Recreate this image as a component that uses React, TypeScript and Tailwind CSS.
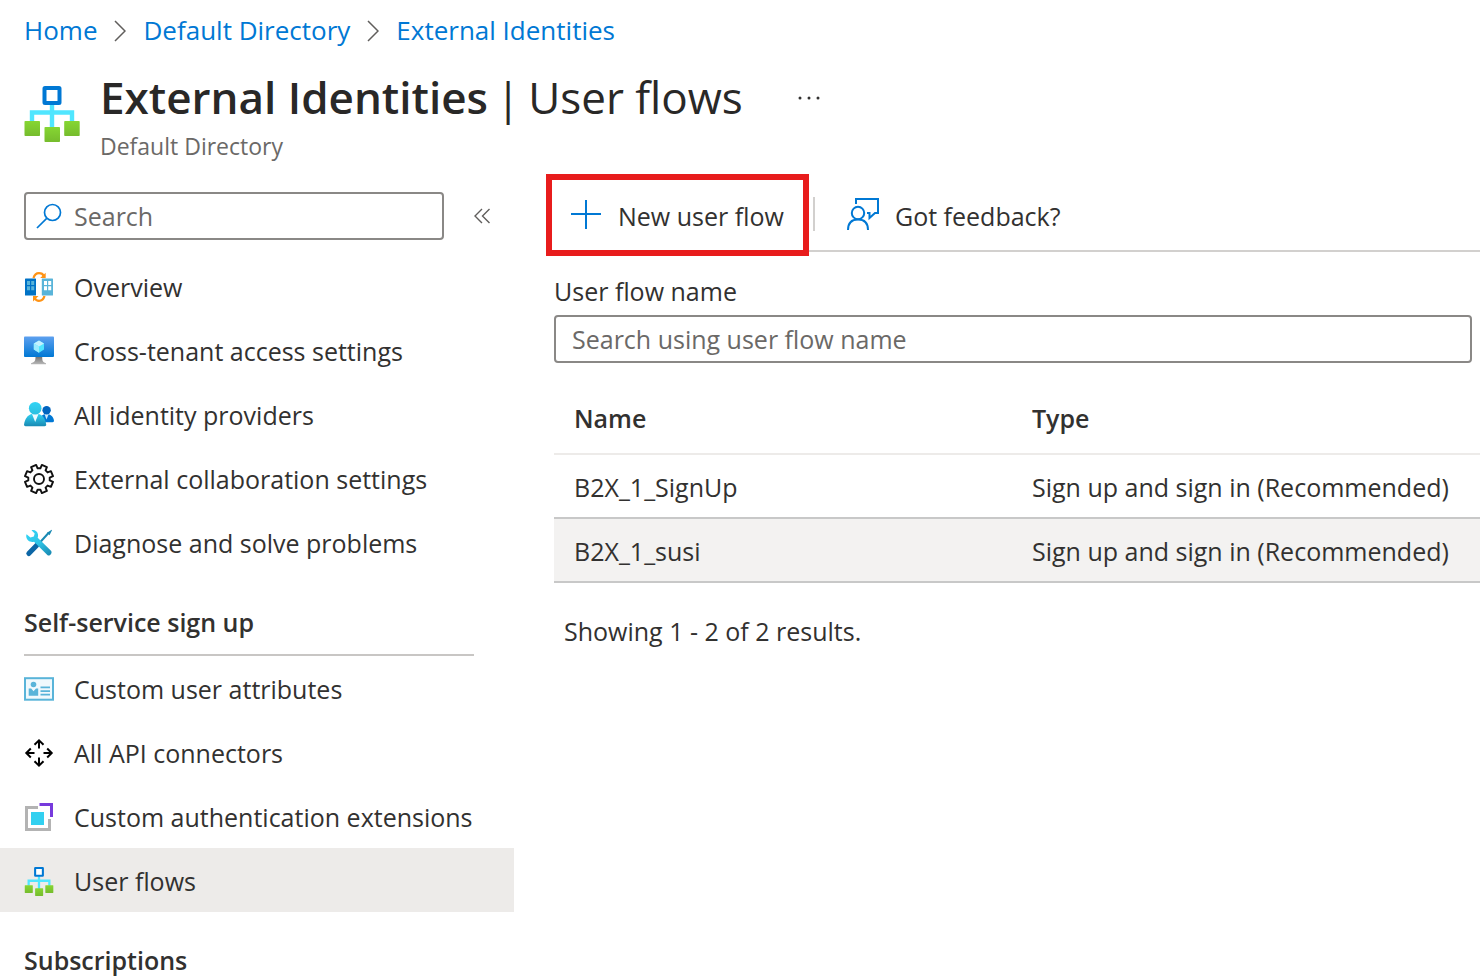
import type { ReactNode } from "react";

function FlowIcon({ className }: { className: string }) {
  return (
    <svg className={className} viewBox="0 0 56 58" fill="none" aria-hidden="true">
      <defs>
        <linearGradient id="leaf" x1="0" y1="0" x2="0" y2="1">
          <stop offset="0" stopColor="#86d633" />
          <stop offset="1" stopColor="#76bc2d" />
        </linearGradient>
      </defs>
      <path d="M28 20V44M8 38V28.500H48V38" stroke="#50e6ff" strokeWidth="4.400" />
      <rect x="20.500" y="4" width="15" height="15" rx="0.500" fill="#fff" stroke="#0078d4" strokeWidth="4" />
      <rect x="0.500" y="37" width="15.500" height="15" rx="0.800" fill="url(#leaf)" />
      <rect x="20.500" y="43" width="15.500" height="15" rx="0.800" fill="url(#leaf)" />
      <rect x="40.200" y="37" width="15.500" height="15" rx="0.800" fill="url(#leaf)" />
    </svg>
  );
}

const iconClass = "size-[30px] shrink-0";

function OverviewIcon() {
  return (
    <svg className={iconClass} viewBox="0 0 30 30" fill="none" aria-hidden="true">
      <path d="M9.500 6C10.500 2.500 12.500 1.200 15 1.200C17.500 1.200 19 2.200 19.800 4" stroke="#ff9315" strokeWidth="2.300" />
      <path d="M21.700 0.800V6H16.200Z" fill="#ff9315" />
      <path d="M20.500 24C19.500 27.500 17.500 28.800 15 28.800C12.500 28.800 11.500 27.800 10.500 26" stroke="#ff9315" strokeWidth="2.300" />
      <path d="M9 29.500V24H14.500Z" fill="#ff9315" />
      <rect x="1" y="6.500" width="11" height="17" rx="0.600" fill="#0072c6" />
      <path d="M3 9h3v4H3zM7.200 9h3v4h-3zM3 14.200h3v4H3zM7.200 14.200h3v4h-3z" fill="#59b4d9" />
      <rect x="17.800" y="6.500" width="11.200" height="17" rx="0.600" fill="#59b4d9" />
      <path d="M20 9h3v4h-3zM24.200 9h3v4h-3zM20 14.200h3v4h-3zM24.200 14.200h3v4h-3z" fill="#fff" />
    </svg>
  );
}

function MonitorIcon() {
  return (
    <svg className={iconClass} viewBox="0 0 30 30" aria-hidden="true">
      <defs>
        <linearGradient id="screen" x1="0" y1="0" x2="0" y2="1">
          <stop offset="0" stopColor="#5ea0ef" />
          <stop offset="1" stopColor="#0078d4" />
        </linearGradient>
        <linearGradient id="stand" x1="0" y1="0" x2="0" y2="1">
          <stop offset="0" stopColor="#707070" />
          <stop offset="1" stopColor="#b8b8b8" />
        </linearGradient>
      </defs>
      <path d="M11.500 20.500H18.200C18.200 24.500 18.500 26.300 22 27.200V28.200H7V27.200C11 26.300 11.500 24.500 11.500 20.500Z" fill="url(#stand)" />
      <rect y="0.500" width="30" height="20.500" rx="0.900" fill="url(#screen)" />
      <path d="M15 4.500L20 7.500V13.500L15 16.700L9.800 13.500V7.500Z" fill="#50e6ff" />
      <path d="M15 4.500L20 7.500L15 10.500L9.800 7.500Z" fill="#c3f1ff" />
      <path d="M9.800 7.500L15 10.500V16.700L9.800 13.500Z" fill="#9cebff" />
    </svg>
  );
}

function PeopleIcon() {
  return (
    <svg className={iconClass} viewBox="0 0 30 30" aria-hidden="true">
      <defs>
        <linearGradient id="person" x1="0" y1="0" x2="0" y2="1">
          <stop offset="0" stopColor="#32d4f5" />
          <stop offset="1" stopColor="#198ab3" />
        </linearGradient>
        <linearGradient id="personHead" x1="0" y1="0" x2="0" y2="1">
          <stop offset="0" stopColor="#32d4f5" />
          <stop offset="1" stopColor="#2bbfe0" />
        </linearGradient>
      </defs>
      <path d="M18 15.500C19.500 14.200 21 14 22.500 14C27 14 29.500 17 30 20.800C30 21.700 29.500 22.200 28.600 22.200H18Z" fill="#0078d4" />
      <path d="M20.500 14L22.500 19.500L24.700 14Z" fill="#cfe8fb" />
      <circle cx="22.600" cy="10.200" r="4.200" fill="#0064bf" />
      <path d="M11.200 13.500C4.500 13.500 1 18 0 24.500C0 25.500 0.600 26.200 1.600 26.200H20.600C21.700 26.200 22.300 25.500 22.200 24.500C21.300 18 18 13.500 11.200 13.500Z" fill="url(#person)" />
      <path d="M7.800 13.500L11.200 22L14.700 13.500Z" fill="#eefaff" />
      <circle cx="11.200" cy="8.200" r="6.300" fill="url(#personHead)" />
    </svg>
  );
}

const gearTeeth = Array.from({ length: 8 }, (_, i) => {
  const point = (radius: number, degrees: number) => {
    const a = ((i * 45 + 22.5 + degrees) * Math.PI) / 180;
    return `${(15 + radius * Math.sin(a)).toFixed(2)} ${(15 - radius * Math.cos(a)).toFixed(2)}`;
  };
  return `${i === 0 ? "M" : "L"}${point(14.3, -11)}L${point(14.3, 11)}L${point(10.8, 15)}L${point(10.8, 30)}`;
}).join("");

function GearIcon() {
  return (
    <svg className={iconClass} viewBox="0 0 30 30" fill="none" stroke="#111" strokeWidth="1.900" strokeLinejoin="round" aria-hidden="true">
      <path d={`${gearTeeth}Z`} />
      <circle cx="15" cy="15" r="5" />
    </svg>
  );
}

function ToolsIcon() {
  return (
    <svg className={iconClass} viewBox="0 0 30 30" fill="none" aria-hidden="true">
      <defs>
        <linearGradient id="wrench" x1="4" y1="3" x2="26" y2="27" gradientUnits="userSpaceOnUse">
          <stop offset="0" stopColor="#32d4f5" />
          <stop offset="0.500" stopColor="#2fc4e6" />
          <stop offset="1" stopColor="#198ab3" />
        </linearGradient>
      </defs>
      <path d="M15 15.500L24.500 5" stroke="#1989b3" strokeWidth="2" />
      <path d="M23 4.800L27.700 1.800L28 2.200L25.500 7.200Z" fill="#1989b3" />
      <path d="M4.800 25.500L12.800 17.200" stroke="#0c66a6" strokeWidth="5" strokeLinecap="round" />
      <path d="M7.500 2.300C10.200 1.400 13.500 3 14 6.500C14.200 7.700 14 8.700 13.700 9.700L27 22.700C28.800 24.800 26 28.500 23.600 27.200L10 13.700C6.500 14.700 2.700 12.700 2.200 8.500C2.200 7.500 2.300 6.800 2.600 6.200L6.400 9.500L9.800 8.600L10.700 5.500Z" fill="url(#wrench)" />
    </svg>
  );
}

function CardIcon() {
  return (
    <svg className={iconClass} viewBox="0 0 30 30" aria-hidden="true">
      <rect x="1" y="4.200" width="28" height="21.500" fill="#f0f9fd" stroke="#59b4d9" strokeWidth="2" />
      <circle cx="9.500" cy="10.500" r="2.800" fill="#59b4d9" />
      <path d="M4.700 21.800V14.500H7.200L9.500 17.200L12 14.500H14.200V21.800Z" fill="#59b4d9" />
      <path d="M16.500 12.500H26V14.200H16.500ZM16.500 16.200H26V17.900H16.500ZM16.500 19.800H26V21.500H16.500Z" fill="#59b4d9" />
    </svg>
  );
}

function ConnectorsIcon() {
  return (
    <svg className={iconClass} viewBox="0 0 30 30" fill="none" stroke="#000" strokeWidth="2" aria-hidden="true">
      <path d="M15 10.500V2.500M10.500 6.800L15 2.300L19.500 6.800" />
      <path d="M15 19.500V27.500M10.500 23.200L15 27.700L19.500 23.200" />
      <path d="M10.500 15H2.500M6.800 10.500L2.300 15L6.800 19.500" />
      <path d="M19.500 15H27.500M23.200 10.500L27.700 15L23.200 19.500" />
    </svg>
  );
}

function ExtensionIcon() {
  return (
    <svg className={iconClass} viewBox="0 0 30 30" fill="none" aria-hidden="true">
      <path d="M14 5.500H2.500V27.500H25.500V17" stroke="#b3b3b3" strokeWidth="3" />
      <path d="M15.500 2.500H27.500V15" stroke="#773adc" strokeWidth="3" />
      <rect x="7" y="10" width="13" height="13" fill="#32d0f0" />
    </svg>
  );
}

function Chevron() {
  return (
    <svg className="h-6 w-3 shrink-0" viewBox="0 0 12 24" fill="none" stroke="#605e5c" strokeWidth="1.500" aria-hidden="true">
      <path d="M1 3L11 13L1 23" />
    </svg>
  );
}

function NavItem({ icon, label, active = false }: { icon: ReactNode; label: string; active?: boolean }) {
  return (
    <li>
      <a
        href="#"
        aria-current={active ? "page" : undefined}
        className={`flex h-16 items-center gap-5 pt-0.5 pl-6 whitespace-nowrap ${active ? "bg-[#edebe9]" : ""}`}
      >
        {icon}
        {label}
      </a>
    </li>
  );
}

const flows = ["B2X_1_SignUp", "B2X_1_susi"];

export default function App() {
  return (
    <div className="min-h-screen overflow-hidden bg-white font-['Open_Sans','Noto_Sans',sans-serif] text-[25px] leading-8 text-[#323130]">
      <nav aria-label="Breadcrumb" className="flex h-[60px] items-center gap-[17px] pl-6 text-[26px] whitespace-nowrap text-[#0078d4]">
        <a href="#">Home</a>
        <Chevron />
        <a href="#">Default Directory</a>
        <Chevron />
        <a href="#">External Identities</a>
      </nav>

      <header className="flex h-[132px] gap-5 pt-0.5 pl-6">
        <FlowIcon className="mt-[22px] h-[58px] w-14 shrink-0" />
        <div className="whitespace-nowrap">
          <div className="flex h-[70px] items-center gap-[54px]">
            <h1 className="flex gap-2 text-[44px] leading-[60px] text-[#292827]">
              <span className="font-semibold">External Identities</span>
              <span>|</span>
              <span>User flows</span>
            </h1>
            <button type="button" aria-label="More options">
              <svg className="h-6 w-6" viewBox="0 0 24 24" fill="#323130" aria-hidden="true">
                <circle cx="3" cy="13" r="1.500" />
                <circle cx="12" cy="13" r="1.500" />
                <circle cx="21" cy="13" r="1.500" />
              </svg>
            </button>
          </div>
          <p className="text-[23px] leading-7 text-[#6b6967]">Default Directory</p>
        </div>
      </header>

      <div className="flex">
        <aside className="w-[514px] shrink-0">
          <div className="flex items-center gap-7 pl-6">
            <label className="flex h-12 w-[420px] items-center gap-3 rounded border-2 border-[#8a8886] pl-2.5">
              <svg className="size-[26px] shrink-0" viewBox="0 0 26 26" fill="none" stroke="#0078d4" strokeWidth="1.700" aria-hidden="true">
                <circle cx="16.500" cy="9.500" r="8" />
                <path d="M10.700 15.300L1 25" />
              </svg>
              <input
                type="search"
                aria-label="Search"
                placeholder="Search"
                className="min-w-0 flex-1 bg-transparent outline-none placeholder:text-[#6b6967]"
              />
            </label>
            <button type="button" aria-label="Collapse menu">
              <svg className="size-5" viewBox="0 0 20 20" fill="none" stroke="#605e5c" strokeWidth="1.400" aria-hidden="true">
                <path d="M10 3L3 10L10 17M17.500 3L10.500 10L17.500 17" />
              </svg>
            </button>
          </div>

          <nav aria-label="External Identities">
            <ul className="mt-3.5">
              <NavItem icon={<OverviewIcon />} label="Overview" />
              <NavItem icon={<MonitorIcon />} label="Cross-tenant access settings" />
              <NavItem icon={<PeopleIcon />} label="All identity providers" />
              <NavItem icon={<GearIcon />} label="External collaboration settings" />
              <NavItem icon={<ToolsIcon />} label="Diagnose and solve problems" />
            </ul>
            <h2 className="mr-10 ml-6 h-[82px] border-b-2 border-[#c8c6c4] pt-8 font-semibold">Self-service sign up</h2>
            <ul>
              <NavItem icon={<CardIcon />} label="Custom user attributes" />
              <NavItem icon={<ConnectorsIcon />} label="All API connectors" />
              <NavItem icon={<ExtensionIcon />} label="Custom authentication extensions" />
              <NavItem icon={<FlowIcon className={iconClass} />} label="User flows" active />
            </ul>
            <h2 className="ml-6 pt-8 font-semibold">Subscriptions</h2>
          </nav>
        </aside>

        <main className="min-w-0 flex-1 pl-10">
          <div className="flex h-[60px] border-b-2 border-[#d2d0ce]">
            <button type="button" className="relative flex h-12 w-[259px] items-center gap-4 pl-4 whitespace-nowrap">
              <svg className="size-8 shrink-0" viewBox="0 0 32 32" fill="none" stroke="#0078d4" strokeWidth="2" aria-hidden="true">
                <path d="M16 -1V29M1 14H31" />
              </svg>
              New user flow
              <span className="absolute -top-[18px] right-1 -bottom-4 -left-2 border-6 border-[#e81c1c]" />
            </button>
            <span className="mt-[5px] h-[34px] w-0.5 bg-[#d2d0ce]" />
            <button type="button" className="flex h-12 items-center gap-4 pl-8 whitespace-nowrap">
              <svg className="size-8 shrink-0 overflow-visible" viewBox="0 2 32 32" fill="none" stroke="#0078d4" strokeWidth="2" aria-hidden="true">
                <circle cx="11" cy="15" r="6.200" />
                <path d="M1 32C1 25 5 21.500 11 21.500C17 21.500 21 25 21 32M9 6V1H31V15H28L22.500 20V15H20" />
              </svg>
              Got feedback?
            </button>
          </div>

          <label htmlFor="flow-name" className="block pt-[23px] pb-2">
            User flow name
          </label>
          <div className="pr-2">
            <input
              id="flow-name"
              type="search"
              placeholder="Search using user flow name"
              className="h-12 w-full rounded border-2 border-[#8a8886] px-4 outline-none placeholder:text-[#6b6967]"
            />
          </div>

          <table className="mt-[27px] w-full table-fixed border-collapse text-left whitespace-nowrap">
            <colgroup>
              <col className="w-[458px]" />
              <col />
            </colgroup>
            <thead>
              <tr className="h-16 border-b-2 border-[#edebe9]">
                <th className="pb-2 pl-5 font-semibold">Name</th>
                <th className="pb-2 pl-5 font-semibold">Type</th>
              </tr>
            </thead>
            <tbody>
              {flows.map((name) => (
                <tr key={name} className="h-16 border-b-2 border-[#c8c8c8] even:bg-[#f3f2f1]">
                  <td className="pt-0.5 pl-5">{name}</td>
                  <td className="pt-0.5 pl-5">Sign up and sign in (Recommended)</td>
                </tr>
              ))}
            </tbody>
          </table>
          <p className="mt-8 pl-2.5">Showing 1 - 2 of 2 results.</p>
        </main>
      </div>
    </div>
  );
}
